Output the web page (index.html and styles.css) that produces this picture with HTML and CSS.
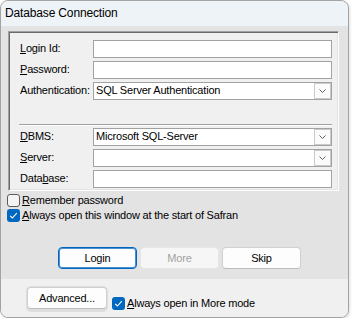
FILE: index.html
```html
<!DOCTYPE html>
<html>
<head>
<meta charset="utf-8">
<link rel="stylesheet" href="styles.css">
</head>
<body>
<div class="win">
  <div class="titlebar">Database Connection</div>
  <div class="main">
    <div class="group">
      <div class="grid">
        <div class="lbl"><u>L</u>ogin Id:</div>
        <div class="field"></div>
        <div class="lbl"><u>P</u>assword:</div>
        <div class="field"></div>
        <div class="lbl">Authentication:</div>
        <div class="field combo"><span class="val">SQL Server Authentication</span><span class="drop"><svg width="7" height="4" viewBox="0 0 7 4"><polyline points="0.5,0.5 3.5,3.5 6.5,0.5" fill="none" stroke="#606060" stroke-width="1"/></svg></span></div>
      </div>
      <div class="sep"></div>
      <div class="grid">
        <div class="lbl"><u>D</u>BMS:</div>
        <div class="field combo"><span class="val">Microsoft SQL-Server</span><span class="drop"><svg width="7" height="4" viewBox="0 0 7 4"><polyline points="0.5,0.5 3.5,3.5 6.5,0.5" fill="none" stroke="#606060" stroke-width="1"/></svg></span></div>
        <div class="lbl"><u>S</u>erver:</div>
        <div class="field combo"><span class="val"></span><span class="drop"><svg width="7" height="4" viewBox="0 0 7 4"><polyline points="0.5,0.5 3.5,3.5 6.5,0.5" fill="none" stroke="#606060" stroke-width="1"/></svg></span></div>
        <div class="lbl">Data<u>b</u>ase:</div>
        <div class="field"></div>
      </div>
    </div>
    <div class="checks">
      <div class="chk"><span class="box"></span><span class="txt"><u>R</u>emember password</span></div>
      <div class="chk"><span class="box on"><svg width="13" height="13" viewBox="0 0 13 13"><polyline points="3.2,6.8 5.4,9 9.8,4.2" fill="none" stroke="#fff" stroke-width="1.1"/></svg></span><span class="txt"><u>A</u>lways open this window at the start of Safran</span></div>
    </div>
    <div class="btns">
      <div class="btn default">Login</div>
      <div class="btn disabled">More</div>
      <div class="btn">Skip</div>
    </div>
  </div>
  <div class="foot">
    <div class="btn adv">Advanced...</div>
    <div class="chk footchk"><span class="box on"><svg width="13" height="13" viewBox="0 0 13 13"><polyline points="3.2,6.8 5.4,9 9.8,4.2" fill="none" stroke="#fff" stroke-width="1.1"/></svg></span><span class="txt"><u>A</u>lways open in More mode</span></div>
  </div>
</div>
</body>
</html>
```
FILE: styles.css
```css
html, body {
  margin: 0;
  padding: 0;
  background: #ffffff;
}
body {
  font-family: "Liberation Sans", Arial, sans-serif;
  font-size: 11px;
  letter-spacing: -0.2px;
  color: #000;
}
.win {
  width: 349px;
  height: 318px;
  box-sizing: border-box;
  border: 1px solid #a3a3a3;
  border-radius: 8px;
  overflow: hidden;
  display: flex;
  flex-direction: column;
  background: #e3e3e3;
  box-shadow: 1px 1px 3px rgba(0,0,0,0.12);
}
.titlebar {
  height: 25px;
  line-height: 25px;
  padding-left: 4px;
  font-size: 12px;
  letter-spacing: -0.15px;
  background: #eef3f8;
  flex: none;
}
.main {
  flex: 1;
  display: flex;
  flex-direction: column;
  background: #e3e3e3;
}
.group {
  margin: 5px 0 0 7px;
  width: 331px;
  box-sizing: border-box;
  border-top: 1px solid #a0a0a0;
  border-left: 1px solid #a0a0a0;
  border-right: 1px solid #ffffff;
  border-bottom: 1px solid #ffffff;
  box-shadow: inset 1px 1px 0 #696969, inset -1px -1px 0 #e3e3e3;
  background: #f0f0f0;
  padding: 8px 6px 2px 11px;
}
.grid {
  display: grid;
  grid-template-columns: 73px 239px;
  grid-auto-rows: 18px;
  row-gap: 3px;
}
.lbl {
  display: flex;
  align-items: center;
  padding-bottom: 2px;
  white-space: nowrap;
}
.field {
  box-sizing: border-box;
  height: 18px;
  border: 1px solid #a2a2a2;
  background: #fff;
}
.combo {
  display: flex;
  align-items: stretch;
}
.combo .val {
  flex: 1;
  padding-left: 2px;
  line-height: 14px;
  white-space: nowrap;
}
.drop {
  width: 15px;
  margin: 0 0 0 0;
  border: 1px solid #cacaca;
  background: #fbfbfb;
  display: flex;
  align-items: center;
  justify-content: center;
}
.sep {
  margin: 24px 0 2px -1px;
  width: 313px;
  height: 0;
  border-top: 1px solid #a0a0a0;
  border-bottom: 1px solid #ffffff;
}
.checks {
  margin: 2px 0 0 6px;
  display: flex;
  flex-direction: column;
}
.chk {
  display: flex;
  align-items: center;
  height: 15px;
  white-space: nowrap;
}
.box {
  width: 13px;
  height: 13px;
  box-sizing: border-box;
  border: 1px solid #5c5c5c;
  border-radius: 3px;
  background: #f4f4f4;
  margin-right: 2px;
  flex: none;
  display: flex;
}
.box.on {
  border: none;
  background: #0067c0;
}
.chk .txt {
  padding-bottom: 1px;
}
.btns {
  margin: 24px 0 0 57px;
  display: flex;
  gap: 3px;
}
.btn {
  width: 79px;
  height: 22px;
  box-sizing: border-box;
  border: 1px solid #d0d0d0;
  border-bottom-color: #bdbdbd;
  border-radius: 4px;
  background: #fdfdfd;
  display: flex;
  align-items: center;
  justify-content: center;
  padding-bottom: 1px;
}
.btn.default {
  border: 1px solid #0067c0;
  box-shadow: inset 0 0 0 1px #4a8fd0;
}
.btn.disabled {
  border-color: #e6e6e6;
  background: #f6f6f6;
  color: #a2a2a2;
}
.foot {
  height: 38px;
  flex: none;
  background: #f0f0f0;
  display: flex;
  align-items: flex-start;
  padding: 8px 0 0 26px;
  box-sizing: border-box;
}
.btn.adv {
  width: 80px;
  box-shadow: 0 0 0 1px #dedede, 0 2px 0 1px #dedede;
}
.footchk {
  margin: 10px 0 0 5px;
  height: 13px;
}
```
